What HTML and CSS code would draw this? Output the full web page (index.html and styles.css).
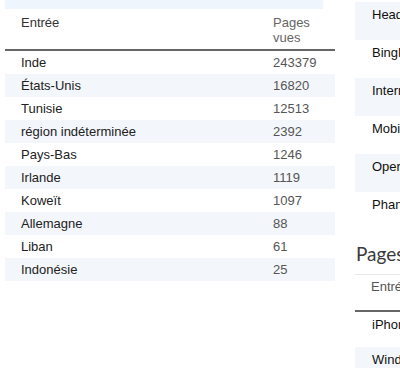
FILE: index.html
```html
<!DOCTYPE html>
<html lang="fr">
<head>
<meta charset="utf-8">
<title>Statistiques</title>
<link rel="stylesheet" href="styles.css">
</head>
<body>
<div class="page">
  <section class="left">
    <div class="banner"></div>
    <table class="stats">
      <thead>
        <tr><th class="c1">Entrée</th><th class="c2">Pages<br>vues</th></tr>
      </thead>
      <tbody>
        <tr><td class="c1">Inde</td><td class="c2">243379</td></tr>
        <tr><td class="c1">États-Unis</td><td class="c2">16820</td></tr>
        <tr><td class="c1">Tunisie</td><td class="c2">12513</td></tr>
        <tr><td class="c1">région indéterminée</td><td class="c2">2392</td></tr>
        <tr><td class="c1">Pays-Bas</td><td class="c2">1246</td></tr>
        <tr><td class="c1">Irlande</td><td class="c2">1119</td></tr>
        <tr><td class="c1">Koweït</td><td class="c2">1097</td></tr>
        <tr><td class="c1">Allemagne</td><td class="c2">88</td></tr>
        <tr><td class="c1">Liban</td><td class="c2">61</td></tr>
        <tr><td class="c1">Indonésie</td><td class="c2">25</td></tr>
      </tbody>
    </table>
  </section>
  <section class="right">
    <table class="side">
      <tbody>
        <tr><td>HeadlessChrome</td></tr>
        <tr><td>BingPreview</td></tr>
        <tr><td>Internet Explorer</td></tr>
        <tr><td>Mobile Safari</td></tr>
        <tr><td>Opera</td></tr>
        <tr><td>PhantomJS</td></tr>
      </tbody>
    </table>
    <h2 class="heading">Pages vues par système</h2>
    <table class="side2">
      <thead>
        <tr><th>Entrée</th></tr>
      </thead>
      <tbody>
        <tr><td>iPhone</td></tr>
        <tr><td>Windows</td></tr>
      </tbody>
    </table>
  </section>
</div>
</body>
</html>
```
FILE: styles.css
```css
html, body {
  margin: 0;
  padding: 0;
  background: #ffffff;
  overflow: hidden;
}
body {
  font-family: "Liberation Sans", Arial, sans-serif;
  font-size: 13px;
  line-height: 15px;
  color: #222;
}
.page {
  display: flex;
  gap: 20px;
  padding-left: 5px;
  width: 700px;
}
.left {
  width: 330px;
  flex: none;
}
.banner {
  height: 9px;
  width: 318px;
  background: #eef5fc;
}
.stats {
  width: 330px;
  border-collapse: collapse;
  table-layout: fixed;
}
.stats th {
  font-weight: normal;
  text-align: left;
  vertical-align: top;
  padding: 6px 0 4px 16px;
  border-bottom: 2px solid #666;
  color: #333;
}
.stats th.c2 {
  color: #666;
  padding-left: 8px;
}
.stats .c1 { width: 244px; }
.stats td {
  padding: 4px 0 4px 16px;
  height: 15px;
  color: #222;
}
.stats td.c2 {
  padding-left: 8px;
  color: #555;
}
.stats tbody tr:nth-child(even) td {
  background: #f3f6fa;
}
.right {
  width: 300px;
  flex: none;
  padding-top: 2px;
}
.side, .side2 {
  width: 300px;
  border-collapse: collapse;
}
.side td {
  height: 38px;
  box-sizing: border-box;
  padding: 5px 0 0 17px;
  vertical-align: top;
  color: #111;
  white-space: nowrap;
}
.side tr:nth-child(odd) td {
  background: #f3f6fa;
}
.heading {
  font-family: Lato, sans-serif;
  font-weight: normal;
  font-size: 19px;
  line-height: 26px;
  color: #3a3a3a;
  margin: 11px 0 7px 1px;
  white-space: nowrap;
}
.side2 {
  border-top: 1px solid #e6e8eb;
}
.side2 th {
  font-weight: normal;
  text-align: left;
  vertical-align: top;
  height: 36px;
  box-sizing: border-box;
  padding: 4px 0 0 16px;
  color: #555;
  border-bottom: 2px solid #666;
}
.side2 td {
  height: 36px;
  box-sizing: border-box;
  padding: 5px 0 0 17px;
  vertical-align: top;
  color: #111;
}
.side2 tbody tr:nth-child(even) td {
  background: #f3f6fa;
}
```
